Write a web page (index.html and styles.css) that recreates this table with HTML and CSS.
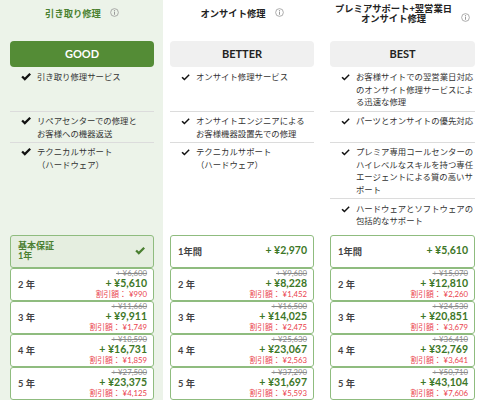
FILE: index.html
```html
<!DOCTYPE html>
<html lang="ja">
<head>
<meta charset="utf-8">
<title>保守プラン</title>
<link rel="stylesheet" href="styles.css">
</head>
<body>
<div class="plans">
  <div class="head"><div class="title-group"><span class="title title-good">引き取り修理</span><svg class="info" viewBox="0 0 10 10"><circle cx="5" cy="5" r="4.3" fill="none" stroke="#9a9a9a" stroke-width="0.9"/><circle cx="5" cy="3" r="0.7" fill="#9a9a9a"/><rect x="4.45" y="4.2" width="1.1" height="3.3" fill="#9a9a9a"/></svg></div></div>
  <div class="head"><div class="title-group"><span class="title">オンサイト修理</span><svg class="info" viewBox="0 0 10 10"><circle cx="5" cy="5" r="4.3" fill="none" stroke="#9a9a9a" stroke-width="0.9"/><circle cx="5" cy="3" r="0.7" fill="#9a9a9a"/><rect x="4.45" y="4.2" width="1.1" height="3.3" fill="#9a9a9a"/></svg></div></div>
  <div class="head"><div class="title-group"><span class="title">プレミアサポート+翌営業日<br>オンサイト修理</span><svg class="info" viewBox="0 0 10 10"><circle cx="5" cy="5" r="4.3" fill="none" stroke="#9a9a9a" stroke-width="0.9"/><circle cx="5" cy="3" r="0.7" fill="#9a9a9a"/><rect x="4.45" y="4.2" width="1.1" height="3.3" fill="#9a9a9a"/></svg></div></div>

  <div class="btn btn-good">GOOD</div>
  <div class="btn">BETTER</div>
  <div class="btn">BEST</div>

  <div class="feat"><svg class="check check-lg" viewBox="0 0 10 8"><path d="M0.3 4.3 L1.9 2.8 L3.8 4.6 L8.4 0 L10 1.5 L3.8 7.7 Z" fill="#111"/></svg><span>引き取り修理サービス</span></div>
  <div class="feat"><svg class="check" viewBox="0 0 10 8"><path d="M0.4 4.4 L1.8 3.1 L3.8 5 L8.6 0.2 L9.8 1.5 L3.8 7.4 Z" fill="#111"/></svg><span>オンサイト修理サービス</span></div>
  <div class="feat"><svg class="check" viewBox="0 0 10 8"><path d="M0.4 4.4 L1.8 3.1 L3.8 5 L8.6 0.2 L9.8 1.5 L3.8 7.4 Z" fill="#111"/></svg><span>お客様サイトでの翌営業日対応<br>のオンサイト修理サービスによ<br>る迅速な修理</span></div>

  <div class="feat feat-sep"><svg class="check check-lg" viewBox="0 0 10 8"><path d="M0.3 4.3 L1.9 2.8 L3.8 4.6 L8.4 0 L10 1.5 L3.8 7.7 Z" fill="#111"/></svg><span>リペアセンターでの修理と<br>お客様への機器返送</span></div>
  <div class="feat feat-sep"><svg class="check" viewBox="0 0 10 8"><path d="M0.4 4.4 L1.8 3.1 L3.8 5 L8.6 0.2 L9.8 1.5 L3.8 7.4 Z" fill="#111"/></svg><span>オンサイトエンジニアによる<br>お客様機器設置先での修理</span></div>
  <div class="feat feat-sep"><svg class="check" viewBox="0 0 10 8"><path d="M0.4 4.4 L1.8 3.1 L3.8 5 L8.6 0.2 L9.8 1.5 L3.8 7.4 Z" fill="#111"/></svg><span>パーツとオンサイトの優先対応</span></div>

  <div class="feat feat-sep"><svg class="check check-lg" viewBox="0 0 10 8"><path d="M0.3 4.3 L1.9 2.8 L3.8 4.6 L8.4 0 L10 1.5 L3.8 7.7 Z" fill="#111"/></svg><span>テクニカルサポート<br>（ハードウェア）</span></div>
  <div class="feat feat-sep"><svg class="check" viewBox="0 0 10 8"><path d="M0.4 4.4 L1.8 3.1 L3.8 5 L8.6 0.2 L9.8 1.5 L3.8 7.4 Z" fill="#111"/></svg><span>テクニカルサポート<br>（ハードウェア）</span></div>
  <div class="feat feat-sep"><svg class="check" viewBox="0 0 10 8"><path d="M0.4 4.4 L1.8 3.1 L3.8 5 L8.6 0.2 L9.8 1.5 L3.8 7.4 Z" fill="#111"/></svg><span>プレミア専用コールセンターの<br>ハイレベルなスキルを持つ専任<br>エージェントによる質の高いサ<br>ポート</span></div>

  <div class="feat"></div>
  <div class="feat"></div>
  <div class="feat feat-sep"><svg class="check" viewBox="0 0 10 8"><path d="M0.4 4.4 L1.8 3.1 L3.8 5 L8.6 0.2 L9.8 1.5 L3.8 7.4 Z" fill="#111"/></svg><span>ハードウェアとソフトウェアの<br>包括的なサポート</span></div>

  <div class="prices">
    <div class="row row-base"><div class="base">基本保証<br>1年</div><svg class="base-check" viewBox="0 0 10 8"><path d="M0.3 4.3 L1.9 2.8 L3.8 4.6 L8.4 0 L10 1.5 L3.8 7.7 Z" fill="#4a7f31"/></svg></div>
    <div class="row"><span class="yr">2 年</span><div class="amt"><span class="was">+ ¥6,600</span><span class="now">+ ¥5,610</span><span class="off">割引額： ¥990</span></div></div>
    <div class="row"><span class="yr">3 年</span><div class="amt"><span class="was">+ ¥11,660</span><span class="now">+ ¥9,911</span><span class="off">割引額： ¥1,749</span></div></div>
    <div class="row"><span class="yr">4 年</span><div class="amt"><span class="was">+ ¥18,590</span><span class="now">+ ¥16,731</span><span class="off">割引額： ¥1,859</span></div></div>
    <div class="row"><span class="yr">5 年</span><div class="amt"><span class="was">+ ¥27,500</span><span class="now">+ ¥23,375</span><span class="off">割引額： ¥4,125</span></div></div>
  </div>
  <div class="prices">
    <div class="row"><span class="yr">1年間</span><div class="amt"><span class="now">+ ¥2,970</span></div></div>
    <div class="row"><span class="yr">2 年</span><div class="amt"><span class="was">+ ¥9,680</span><span class="now">+ ¥8,228</span><span class="off">割引額： ¥1,452</span></div></div>
    <div class="row"><span class="yr">3 年</span><div class="amt"><span class="was">+ ¥16,500</span><span class="now">+ ¥14,025</span><span class="off">割引額： ¥2,475</span></div></div>
    <div class="row"><span class="yr">4 年</span><div class="amt"><span class="was">+ ¥25,630</span><span class="now">+ ¥23,067</span><span class="off">割引額： ¥2,563</span></div></div>
    <div class="row"><span class="yr">5 年</span><div class="amt"><span class="was">+ ¥37,290</span><span class="now">+ ¥31,697</span><span class="off">割引額： ¥5,593</span></div></div>
  </div>
  <div class="prices">
    <div class="row"><span class="yr">1年間</span><div class="amt"><span class="now">+ ¥5,610</span></div></div>
    <div class="row"><span class="yr">2 年</span><div class="amt"><span class="was">+ ¥15,070</span><span class="now">+ ¥12,810</span><span class="off">割引額： ¥2,260</span></div></div>
    <div class="row"><span class="yr">3 年</span><div class="amt"><span class="was">+ ¥24,530</span><span class="now">+ ¥20,851</span><span class="off">割引額： ¥3,679</span></div></div>
    <div class="row"><span class="yr">4 年</span><div class="amt"><span class="was">+ ¥36,410</span><span class="now">+ ¥32,769</span><span class="off">割引額： ¥3,641</span></div></div>
    <div class="row"><span class="yr">5 年</span><div class="amt"><span class="was">+ ¥50,710</span><span class="now">+ ¥43,104</span><span class="off">割引額： ¥7,606</span></div></div>
  </div>
</div>
</body>
</html>
```

FILE: styles.css
```css
* { box-sizing: border-box; }
html, body { margin: 0; padding: 0; }
body {
  font-family: "Lato", "Noto Sans CJK JP", sans-serif;
  color: #333;
  background: #fff;
  width: 481px;
  height: 400px;
  overflow: hidden;
}
.plans {
  display: grid;
  grid-template-columns: 144px 144px 145px;
  column-gap: 16px;
  padding-left: 10px;
  min-height: 400px;
  background: linear-gradient(90deg, #ecf3e9 0, #ecf3e9 163px, #fff 163px);
}
.head {
  height: 28px;
  display: flex;
  justify-content: center;
  align-items: center;
}
.title-group {
  display: flex;
  align-items: last baseline;
  gap: 9px;
}
.title {
  font-size: 9.3px;
  font-weight: 700;
  line-height: 10.5px;
  text-align: center;
  color: #222;
  white-space: nowrap;
}
.title-good { color: #4a8130; }
.info { width: 9px; height: 9px; display: block; }
.btn {
  margin-top: 13px;
  height: 26px;
  line-height: 26px;
  border-radius: 4px;
  background: #f0f0f0;
  text-align: center;
  font-size: 11px;
  font-weight: 700;
  color: #222;
}
.btn-good { background: #548c36; color: #fff; }
.feat {
  display: flex;
  align-items: flex-start;
  gap: 6px;
  padding: 3.5px 0 1.5px 11px;
  font-size: 8.4px;
  line-height: 12.5px;
  white-space: nowrap;
  color: #333;
}
.feat-sep { border-top: 1px solid #dcdcdc; }
.check { flex: none; margin-top: 3px; width: 9px; height: 7px; }
.check-lg { width: 10px; height: 8px; margin-top: 2px; }
.prices { margin-top: 5px; }
.row {
  height: 33px;
  border: 1px solid #8fbc7f;
  border-radius: 3px;
  display: flex;
  align-items: center;
  justify-content: space-between;
  padding: 0 6px 0 7px;
  background: #fff;
}
.row-base { background: #e5eee0; }
.yr { font-size: 9.3px; font-weight: 700; color: #444; }
.base { font-size: 9px; font-weight: 700; color: #4a7f31; line-height: 10px; }
.base-check { width: 10px; height: 8px; margin-right: 2px; }
.amt { display: flex; flex-direction: column; align-items: flex-end; }
.was { font-size: 7.8px; line-height: 9px; color: #8a8a8a; text-decoration: line-through; }
.now { font-size: 10.5px; line-height: 11.5px; font-weight: 700; color: #3d7727; }
.off { font-size: 7.8px; line-height: 9.5px; color: #ea3f4e; }
```
